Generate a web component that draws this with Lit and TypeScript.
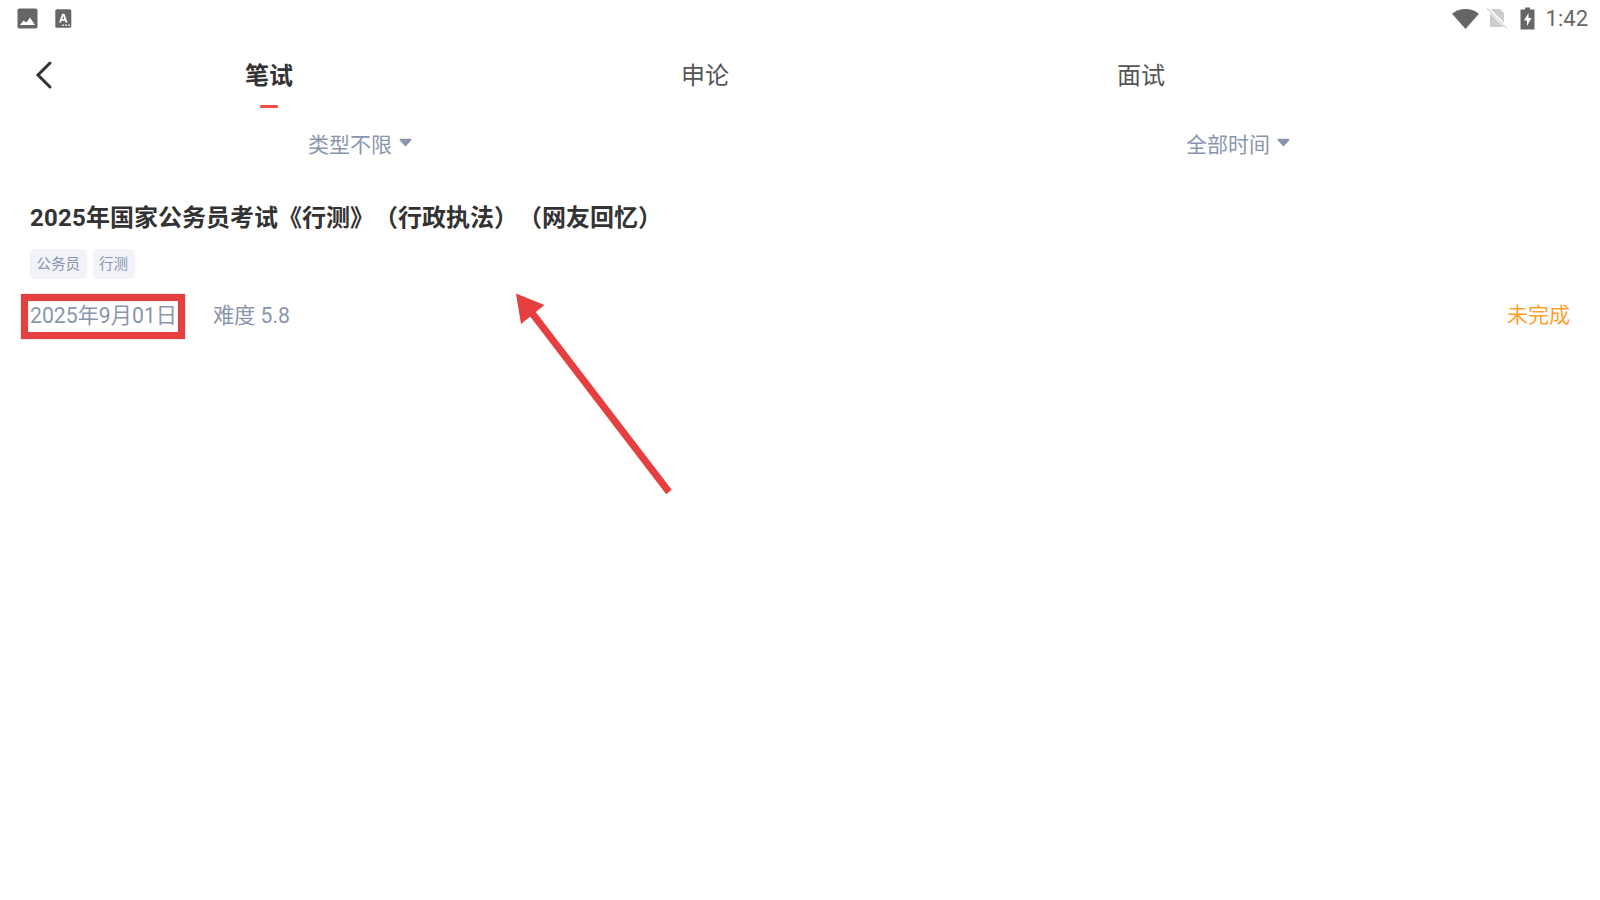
import { LitElement, html, css } from "lit";
import { customElement } from "lit/decorators.js";

@customElement("app-root")
export class AppRoot extends LitElement {
  static styles = css`
    :host { display: block; position: relative; width: 1600px; height: 900px; overflow: hidden; background: #fff;
      font-family: Roboto, "Noto Sans CJK SC", sans-serif; color: #333; text-spacing-trim: space-all; }
    .status { height: 36px; display: flex; align-items: center; padding: 0 12px 0 17px; }
    .status svg { display: block; flex: none; }
    .a-icon { margin-left: 17px; }
    .spacer { flex: 1; }
    .sim { margin-left: 8px; }
    .batt { margin-left: 13px; }
    .time { margin-left: 11px; font-size: 22px; line-height: 36px; color: #666; position: relative; top: 1px; }
    .tabs { height: 78px; display: flex; position: relative; padding-left: 51px; }
    .back { position: absolute; left: 30px; top: 24px; }
    .tab { width: 436px; display: flex; flex-direction: column; align-items: center; padding-top: 23px; box-sizing: border-box;
      font-size: 24px; line-height: 34px; color: #555; }
    .tab.on { color: #333; font-weight: 600; }
    .bar { width: 18px; height: 3px; background: #f44a4a; margin-top: 12px; border-radius: 1px; }
    .filters { height: 58px; display: flex; align-items: center; font-size: 21px; color: #8a96ad; padding-left: 308px; }
    .filter { display: flex; align-items: center; gap: 7px; }
    .filter + .filter { margin-left: 774px; }
    .filter svg { margin-top: -2px; }
    .card { padding: 29px 30px 0; }
    .title { font-size: 24px; line-height: 34px; font-weight: 700; color: #333; }
    .num { letter-spacing: 0.25px; }
    .tags { display: flex; gap: 6px; margin-top: 14px; }
    .tag { height: 30px; line-height: 31px; padding: 0 6.5px; border-radius: 5px; background: #f1f3f8; color: #8a96ad; font-size: 14.5px; }
    .meta { display: flex; align-items: center; margin-top: 18px; height: 32px; font-size: 21.2px; color: #8a96ad; }
    .diff { margin-left: 36px; }
    .state { margin-left: auto; color: #ff9f2e; font-size: 21px; }
    .box { position: absolute; left: 21px; top: 294px; width: 164px; height: 45px; box-sizing: border-box; border: 7px solid #e63f3f;
      box-shadow: 0 0 1px rgba(230, 63, 63, 0.6), inset 0 0 1px rgba(230, 63, 63, 0.6); }
    .arrow { position: absolute; left: 0; top: 0; pointer-events: none; }
  `;

  render() {
    return html`
      <div class="status">
        <svg width="21" height="21" viewBox="0 0 21 21"><rect x="0.5" y="0.5" width="20" height="20" rx="2" fill="#666"/><path d="M3 17l3.500-4.500 3 2 3.500-5 5 7.500z" fill="#fff"/></svg>
        <svg class="a-icon" width="17" height="19" viewBox="0 0 17 19"><rect x="0.300" width="16" height="18.500" y="0.300" rx="1.500" fill="#666"/><path d="M4 13.500L7.200 4.800h2.200l3.200 8.700h-2.100l-.6-1.800H6.700l-.6 1.800zM7.300 10h2L8.300 6.900z" fill="#fff"/><path d="M7 15.500h2V17H7zM10 15.500h2V17h-2zM13 15.500h2V17h-2z" fill="#ddd"/></svg>
        <div class="spacer"></div>
        <svg width="27" height="21" viewBox="0 0 27 21"><path d="M0 5.800C3.800 2.800 8.300 1 13.500 1S23.200 2.800 27 5.800L13.500 21z" fill="#666"/></svg>
        <svg class="sim" width="20" height="22" viewBox="0 0 20 22"><path d="M3 2h10l4 4v14H3z" fill="#ccc"/><path d="M0 1l20 20" stroke="#fff" stroke-width="3.500"/><path d="M0 1.500l20 20" stroke="#d4d4d4" stroke-width="1.200"/></svg>
        <svg class="batt" width="15" height="23" viewBox="0 0 15 23"><path d="M5 0.500h5v2h4.500v20H0.500v-20H5z" fill="#666"/><path d="M8.500 6L4 13.500h3V19l4.500-8h-3z" fill="#fff"/></svg>
        <span class="time">1:42</span>
      </div>
      <div class="tabs">
        <svg class="back" width="26" height="30" viewBox="0 0 26 30"><path d="M20 3L8 15l12 12" fill="none" stroke="#333" stroke-width="3" stroke-linecap="round" stroke-linejoin="miter"/></svg>
        <div class="tab on"><span>笔试</span><div class="bar"></div></div>
        <div class="tab"><span>申论</span></div>
        <div class="tab"><span>面试</span></div>
      </div>
      <div class="filters">
        <div class="filter"><span>类型不限</span><svg width="13" height="9" viewBox="0 0 13 9"><path d="M0.500 2Q0.500 0.800 2 0.800h9q1.500 0 1.500 1.200L7.400 7.800q-.9.800-1.800 0z" fill="#8a96ad"/></svg></div>
        <div class="filter"><span>全部时间</span><svg width="13" height="9" viewBox="0 0 13 9"><path d="M0.500 2Q0.500 0.800 2 0.800h9q1.500 0 1.500 1.200L7.400 7.800q-.9.800-1.800 0z" fill="#8a96ad"/></svg></div>
      </div>
      <div class="card">
        <div class="title"><span class="num">2025</span>年国家公务员考试《行测》（行政执法）（网友回忆）</div>
        <div class="tags"><span class="tag">公务员</span><span class="tag">行测</span></div>
        <div class="meta"><span>2025年9月01日</span><span class="diff">难度 5.8</span><span class="state">未完成</span></div>
      </div>
      <div class="box"></div>
      <svg class="arrow" width="1600" height="900" viewBox="0 0 1600 900">
        <path d="M532 313L669 492" stroke="#e63f3f" stroke-width="7" fill="none"/>
        <path d="M516 293.500L544.500 305L521 324z" fill="#e63f3f"/>
      </svg>
    `;
  }
}
